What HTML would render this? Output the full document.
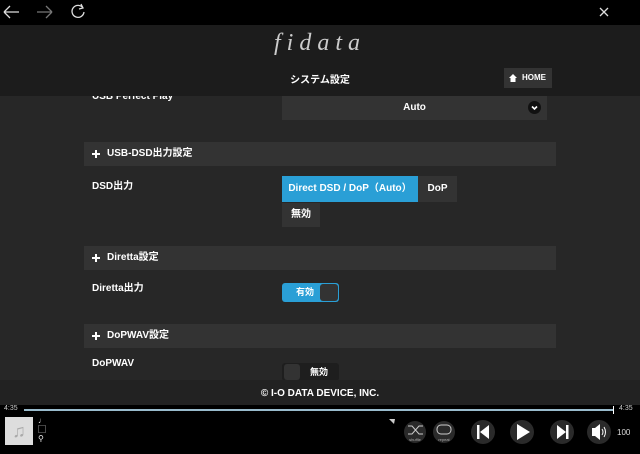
<!DOCTYPE html>
<html><head><meta charset="utf-8"><style>
*{margin:0;padding:0;box-sizing:border-box}
body{width:640px;height:454px;overflow:hidden;background:#272727;font-family:"Liberation Sans","Noto Sans CJK JP",sans-serif;color:#fff;position:relative}
.a{position:absolute}
.bar{position:absolute;left:84px;width:472px;height:24px;background:#333;font-size:10px;font-weight:bold;line-height:24px;padding-left:23px}
.bar:before{content:"";position:absolute;left:8px;width:8px;height:2px;background:#fff;top:11px}
.bar:after{content:"";position:absolute;left:11px;top:8px;width:2px;height:8px;background:#fff}
.lbl{position:absolute;left:92px;font-size:10px;font-weight:bold}
</style></head><body>
<div class="lbl" style="top:91px">USB Perfect Play</div>
<div class="a" style="left:0;top:0;width:640px;height:25px;background:#000"></div>
<svg class="a" style="left:0;top:0" width="640" height="25">
<g stroke="#ddd" stroke-width="1.3" fill="none">
<path d="M4 12H19M4 12L10 6M4 12L10 18"/>
<path d="M37 12H52M52 12L46 6M52 12L46 18" stroke="#777"/>
<path d="M83 8A6 6 0 1 0 84 12M81 4L83 8L79 9"/>
<path d="M600 8L608 16M608 8L600 16"/>
</g></svg>
<div class="a" style="left:0;top:25px;width:640px;height:71px;background:#1c1c1c"></div>
<div class="a" style="left:0;top:30px;width:640px;text-align:center;font-family:'Liberation Serif',serif;font-style:italic;font-size:24px;letter-spacing:6px;color:#ccc">fidata</div>
<div class="a" style="left:0;top:71px;width:640px;text-align:center;font-size:10px;font-weight:bold">システム設定</div>
<div class="a" style="left:504px;top:68px;width:48px;height:20px;background:#333;font-size:8px;font-weight:bold;line-height:20px;padding-left:18px">HOME</div>
<svg class="a" style="left:508px;top:73px" width="10" height="10"><path d="M5 1L1 5H2.5V9H7.5V5H9Z" fill="#fff"/></svg>
<div class="a" style="left:282px;top:96px;width:265px;height:24px;background:#333;text-align:center;font-size:10px;font-weight:bold;line-height:24px">Auto</div>
<div class="a" style="left:528px;top:101px;width:13px;height:13px;border-radius:50%;background:#111"></div>
<svg class="a" style="left:528px;top:101px" width="13" height="13"><path d="M4 5.5L6.5 8L9 5.5" stroke="#fff" stroke-width="1.6" fill="none"/></svg>
<div class="bar" style="top:142px">USB-DSD出力設定</div>
<div class="lbl" style="top:177px">DSD出力</div>
<div class="a" style="left:282px;top:176px;width:136px;height:26px;background:#2a9fd6;font-size:10px;font-weight:bold;line-height:26px;text-align:center">Direct DSD / DoP（Auto）</div>
<div class="a" style="left:418px;top:176px;width:39px;height:26px;background:#333;font-size:10px;font-weight:bold;line-height:26px;text-align:center">DoP</div>
<div class="a" style="left:282px;top:203px;width:38px;height:24px;background:#333;font-size:10px;font-weight:bold;line-height:24px;text-align:center">無効</div>
<div class="bar" style="top:246px">Diretta設定</div>
<div class="lbl" style="top:279px">Diretta出力</div>
<div class="a" style="left:282px;top:283px;width:57px;height:19px;background:#2a9fd6;border-radius:3px;font-size:9px;font-weight:bold;line-height:19px;padding-left:14px">有効</div>
<div class="a" style="left:320px;top:284px;width:18px;height:17px;background:#333;border-radius:3px"></div>
<div class="bar" style="top:324px">DoPWAV設定</div>
<div class="lbl" style="top:358px">DoPWAV</div>
<div class="a" style="left:282px;top:363px;width:57px;height:18px;background:#1e1e1e;border-radius:3px;font-size:9px;font-weight:bold;line-height:18px;padding-left:28px">無効</div>
<div class="a" style="left:284px;top:364px;width:16px;height:16px;background:#333;border-radius:3px"></div>
<div class="a" style="left:0;top:380px;width:640px;height:25px;background:#222;font-size:10px;font-weight:bold;text-align:center;line-height:27px">© I-O DATA DEVICE, INC.</div>
<div class="a" style="left:0;top:405px;width:640px;height:49px;background:#000"></div>
<div class="a" style="left:4px;top:405px;font-size:7px;color:#ccc">4:35</div>
<div class="a" style="left:619px;top:405px;font-size:7px;color:#ccc">4:35</div>
<div class="a" style="left:24px;top:409px;width:590px;height:2px;background:#9bc"></div>
<div class="a" style="left:613px;top:406px;width:1px;height:8px;background:#fff"></div>
<div class="a" style="left:5px;top:417px;width:28px;height:28px;background:#ddd;color:#aaa;font-size:18px;text-align:center;line-height:28px">♫</div>
<div class="a" style="left:38px;top:416px;font-size:8px;line-height:9px;color:#eee">♩<br>▢<br>⚲</div>
<svg class="a" style="left:388px;top:417px" width="252" height="32">
<path d="M1 2L7 2L6 7Z" fill="#ccc"/>
<circle cx="27" cy="15" r="11" fill="#2a2a2a"/><circle cx="56" cy="15" r="11" fill="#2a2a2a"/>
<circle cx="95" cy="15" r="12" fill="#2a2a2a"/><circle cx="134" cy="15" r="12" fill="#2a2a2a"/><circle cx="174" cy="15" r="12" fill="#2a2a2a"/><circle cx="211" cy="15" r="12" fill="#2a2a2a"/>
<path d="M20 9H24L31 17H35M20 17H24L31 9H35" stroke="#ccc" fill="none"/>
<rect x="49" y="8" width="14" height="9" rx="4" stroke="#ccc" fill="none"/>
<text x="27" y="24" font-size="4" fill="#aaa" text-anchor="middle" font-family="Liberation Sans">shuffle</text>
<text x="56" y="24" font-size="4" fill="#aaa" text-anchor="middle" font-family="Liberation Sans">repeat</text>
<rect x="89" y="8" width="2.5" height="14" fill="#fff"/><path d="M101 8V22L92 15Z" fill="#fff"/>
<path d="M129 7V23L142 15Z" fill="#fff"/>
<rect x="178" y="8" width="2.5" height="14" fill="#fff"/><path d="M169 8V22L178 15Z" fill="#fff"/>
<path d="M204 11H207L212 7V23L207 19H204Z" fill="#fff"/><path d="M214 12Q216 15 214 18M216 10Q219 15 216 20" stroke="#fff" fill="none"/>
<text x="229" y="18" font-size="8" fill="#ddd" font-family="Liberation Sans">100</text>
</svg>
</body></html>
